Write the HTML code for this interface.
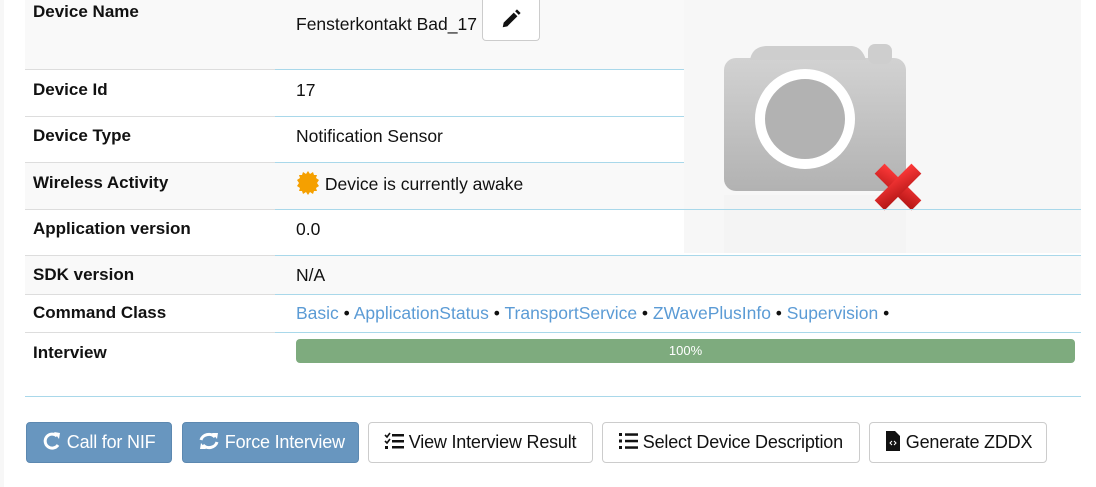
<!DOCTYPE html>
<html><head><style>
body{margin:0;width:1096px;height:487px;background:#fff;font-family:"Liberation Sans",sans-serif;font-size:17.5px;color:#111;position:relative;overflow:hidden}
.edge{position:absolute;left:0;top:0;width:4px;height:487px;background:#f7f7f7}
.row{position:absolute;left:25px;width:1056px}
.row .l{position:absolute;left:8px;font-weight:bold;font-size:17px}
.row .v{position:absolute;left:271px;white-space:nowrap}
.bl{position:absolute;height:1px;left:25px}
.g{background:#f9f9f9}
a{color:#5b9bd5;text-decoration:none}
.btn{position:absolute;top:422px;height:41px;border:1px solid #ccc;border-radius:4px;background:#fff;box-sizing:border-box;font-size:18px;line-height:39px;white-space:nowrap;padding-left:15px;letter-spacing:-0.2px}
.pri{background:#6896bf;border-color:#5c88b0;color:#fff}
</style></head><body>
<div class="edge"></div>
<div class="row g" style="top:0;height:69px"><span class="l" style="top:2px">Device Name</span><span class="v" style="top:14px">Fensterkontakt Bad_17</span></div>
<div style="position:absolute;left:482px;top:0;width:58px;height:41px;border:1px solid #ccc;border-top:none;border-radius:0 0 4px 4px;background:#fff;box-sizing:border-box">
<svg width="22" height="22" viewBox="0 0 24 24" style="position:absolute;left:17px;top:8px"><path d="M3 21l1-5L15 5l4 4L8 20z M16.5 3.5l2-2 4 4-2 2z" fill="#111"/></svg></div>
<div class="row" style="top:69px;height:47px"><span class="l" style="top:11px">Device Id</span><span class="v" style="top:11px">17</span></div>
<div class="row" style="top:116px;height:46px"><span class="l" style="top:10px">Device Type</span><span class="v" style="top:10px">Notification Sensor</span></div>
<div class="row g" style="top:162px;height:47px"><span class="l" style="top:11px">Wireless Activity</span><span class="v" style="top:9px"><svg width="24" height="24" viewBox="0 0 24 24" style="vertical-align:-5px"><polygon fill="#f5a000" points="12,0 14,3 17,1 18,4 21,4 20,7 23,9 21,12 23,15 20,17 21,20 18,20 17,23 14,21 12,24 10,21 7,23 6,20 3,20 4,17 1,15 3,12 1,9 4,7 3,4 6,4 7,1 10,3"/></svg> Device is currently awake</span></div>
<div class="row" style="top:209px;height:46px"><span class="l" style="top:10px">Application version</span><span class="v" style="top:10px">0.0</span></div>
<div class="row g" style="top:255px;height:39px"><span class="l" style="top:10px">SDK version</span><span class="v" style="top:10px">N/A</span></div>
<div class="row" style="top:294px;height:38px"><span class="l" style="top:9px">Command Class</span><span class="v" style="top:9px"><a>Basic</a> • <a>ApplicationStatus</a> • <a>TransportService</a> • <a>ZWavePlusInfo</a> • <a>Supervision</a> •</span></div>
<div class="row" style="top:332px;height:40px"><span class="l" style="top:11px">Interview</span></div>
<div style="position:absolute;left:296px;top:339px;width:779px;height:24px;background:#7eab7e;border-radius:4px;color:#fff;font-size:13px;text-align:center;line-height:24px">100%</div>
<div style="position:absolute;left:684px;top:0;width:397px;height:253px;background:#f7f7f7"></div>
<svg style="position:absolute;left:684px;top:0" width="397" height="253" viewBox="0 0 397 253">
<defs><linearGradient id="cg" x1="0" y1="0" x2="0" y2="1"><stop offset="0" stop-color="#d2d2d2"/><stop offset="1" stop-color="#b2b2b2"/></linearGradient>
<linearGradient id="xg" x1="0" y1="0" x2="1" y2="1"><stop offset="0" stop-color="#ff3a3a"/><stop offset="1" stop-color="#b31515"/></linearGradient></defs>
<rect x="40" y="58" width="182" height="133" rx="12" fill="url(#cg)"/>
<path d="M66 60 Q68 47 82 46 L168 46 Q178 47 182 60 Z" fill="#cecece"/>
<rect x="184" y="44" width="24" height="20" rx="7" fill="#cecece"/>
<circle cx="121" cy="119" r="45" fill="#b2b2b2" stroke="#fff" stroke-width="10"/>
<rect x="40" y="195" width="182" height="58" fill="#f2f2f2" opacity=".5"/>
<g transform="translate(214,187) rotate(45)"><rect x="-26" y="-7" width="52" height="14" fill="url(#xg)"/><rect x="-7" y="-26" width="14" height="52" fill="url(#xg)"/></g>
</svg>
<div class="bl" style="top:69px;width:250px;background:#ddd"></div><div class="bl" style="top:69px;left:275px;width:409px;background:#a9d8ea"></div>
<div class="bl" style="top:116px;width:250px;background:#ddd"></div><div class="bl" style="top:116px;left:275px;width:409px;background:#a9d8ea"></div>
<div class="bl" style="top:162px;width:250px;background:#ddd"></div><div class="bl" style="top:162px;left:275px;width:409px;background:#a9d8ea"></div>
<div class="bl" style="top:209px;width:250px;background:#ddd"></div><div class="bl" style="top:209px;left:275px;width:806px;background:#a9d8ea"></div>
<div class="bl" style="top:255px;width:250px;background:#ddd"></div><div class="bl" style="top:255px;left:275px;width:806px;background:#a9d8ea"></div>
<div class="bl" style="top:294px;width:250px;background:#ddd"></div><div class="bl" style="top:294px;left:275px;width:806px;background:#a9d8ea"></div>
<div class="bl" style="top:332px;width:250px;background:#ddd"></div><div class="bl" style="top:332px;left:275px;width:806px;background:#a9d8ea"></div>
<div class="bl" style="top:396px;width:1056px;background:#a9d8ea"></div>
<div class="btn pri" style="left:26px;width:146px"><svg width="20" height="20" viewBox="0 0 20 20" style="vertical-align:-3px"><path d="M15 5A7 7 0 1 0 16 14" fill="none" stroke="#fff" stroke-width="3"/><path d="M12 1L18 2 17 8z" fill="#fff"/></svg> Call for NIF</div>
<div class="btn pri" style="left:182px;width:177px"><svg width="22" height="20" viewBox="0 0 22 20" style="vertical-align:-3px"><path d="M3 9A8 7 0 0 1 17 6M19 11A8 7 0 0 1 5 14" fill="none" stroke="#fff" stroke-width="3"/><path d="M14 2L20 2 19 8zM8 18L2 18 3 12z" fill="#fff"/></svg> Force Interview</div>
<div class="btn" style="left:368px;width:225px"><svg width="20" height="18" viewBox="0 0 20 18" style="vertical-align:-2px"><path d="M1 3l2 2 3-4M1 9l2 2 3-4" fill="none" stroke="#111" stroke-width="1.6"/><rect x="1" y="14" width="3" height="3" fill="#111"/><rect x="8" y="2" width="12" height="2.5" fill="#111"/><rect x="8" y="8" width="12" height="2.5" fill="#111"/><rect x="8" y="14" width="12" height="2.5" fill="#111"/></svg> View Interview Result</div>
<div class="btn" style="left:602px;width:258px"><svg width="20" height="18" viewBox="0 0 20 18" style="vertical-align:-2px"><rect x="1" y="1" width="3" height="3" fill="#111"/><rect x="1" y="7.5" width="3" height="3" fill="#111"/><rect x="1" y="14" width="3" height="3" fill="#111"/><rect x="7" y="1.3" width="13" height="2.5" fill="#111"/><rect x="7" y="7.8" width="13" height="2.5" fill="#111"/><rect x="7" y="14.3" width="13" height="2.5" fill="#111"/></svg> Select Device Description</div>
<div class="btn" style="left:869px;width:178px"><svg width="16" height="22" viewBox="0 0 16 22" style="vertical-align:-4px"><path d="M1 1h9l5 5v15H1z" fill="#111"/><path d="M7 11l-2 2 2 2M9 11l2 2-2 2" stroke="#fff" stroke-width="1" fill="none"/></svg> Generate ZDDX</div>
</body></html>
